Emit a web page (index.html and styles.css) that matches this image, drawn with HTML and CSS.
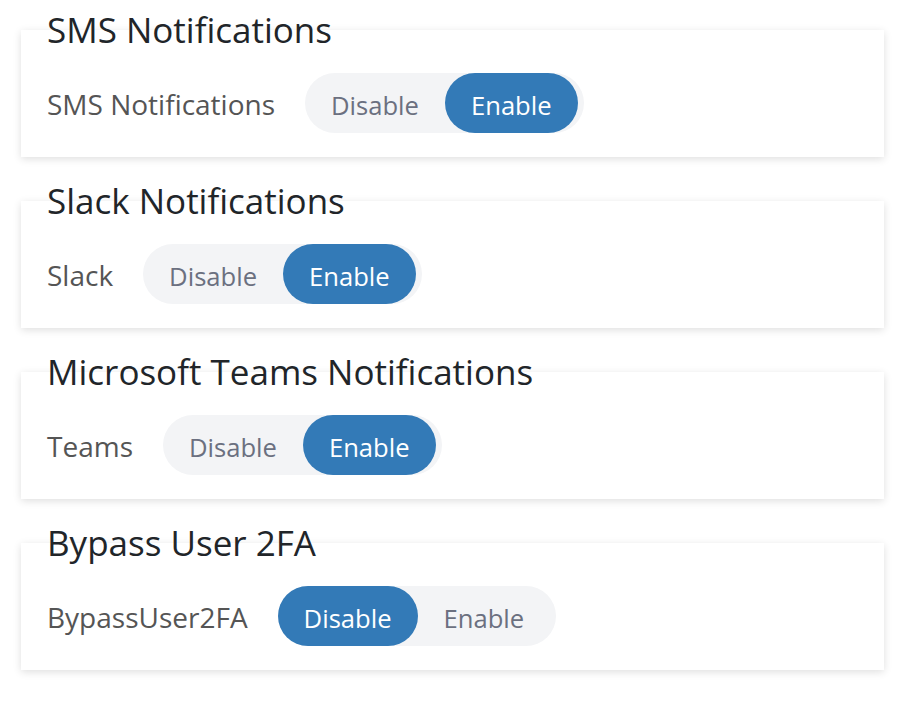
FILE: index.html
```html
<!DOCTYPE html>
<html>
<head>
<meta charset="utf-8">
<link rel="stylesheet" href="styles.css">
</head>
<body>
<div class="page">
  <section class="group">
    <h2 class="group-title">SMS Notifications</h2>
    <div class="card">
      <div class="row">
        <span class="label">SMS Notifications</span>
        <div class="toggle">
          <button class="opt">Disable</button>
          <button class="opt active">Enable</button>
        </div>
      </div>
    </div>
  </section>
  <section class="group">
    <h2 class="group-title">Slack Notifications</h2>
    <div class="card">
      <div class="row">
        <span class="label">Slack</span>
        <div class="toggle">
          <button class="opt">Disable</button>
          <button class="opt active">Enable</button>
        </div>
      </div>
    </div>
  </section>
  <section class="group">
    <h2 class="group-title">Microsoft Teams Notifications</h2>
    <div class="card">
      <div class="row">
        <span class="label">Teams</span>
        <div class="toggle">
          <button class="opt">Disable</button>
          <button class="opt active">Enable</button>
        </div>
      </div>
    </div>
  </section>
  <section class="group">
    <h2 class="group-title">Bypass User 2FA</h2>
    <div class="card">
      <div class="row">
        <span class="label">BypassUser2FA</span>
        <div class="toggle">
          <button class="opt active">Disable</button>
          <button class="opt">Enable</button>
        </div>
      </div>
    </div>
  </section>
</div>
</body>
</html>
```
FILE: styles.css
```css
html, body {
  margin: 0;
  padding: 0;
  background: #ffffff;
}
body {
  font-family: "Open Sans", "Noto Sans", sans-serif;
  color: #222;
}
.page {
  width: 863px;
  padding: 10px 0 0 21px;
}
.group {
  display: flex;
  flex-direction: column;
  margin-bottom: 24px;
}
.group-title {
  position: relative;
  z-index: 1;
  margin: 0 0 -20px 26px;
  font-size: 35px;
  line-height: 40px;
  font-weight: 400;
  color: #212529;
}
.card {
  background: #fff;
  box-shadow: 0 2px 8px rgba(0, 0, 0, 0.13);
  padding: 43px 26px 24px;
}
.row {
  display: flex;
  align-items: center;
}
.label {
  font-size: 28px;
  line-height: 34px;
  padding-top: 2px;
  color: #555;
  margin-right: 30px;
}
.toggle {
  display: inline-flex;
  background: #f3f4f6;
  border-radius: 30px;
  padding-right: 6px;
}
.opt {
  box-sizing: border-box;
  height: 60px;
  padding: 4px 26px 0;
  border: 0;
  border-radius: 30px;
  background: transparent;
  font-family: "Open Sans", "Noto Sans", sans-serif;
  font-size: 25.6px;
  color: #6b7080;
  cursor: pointer;
}
.opt.active {
  background: #337ab7;
  color: #fff;
}
```
